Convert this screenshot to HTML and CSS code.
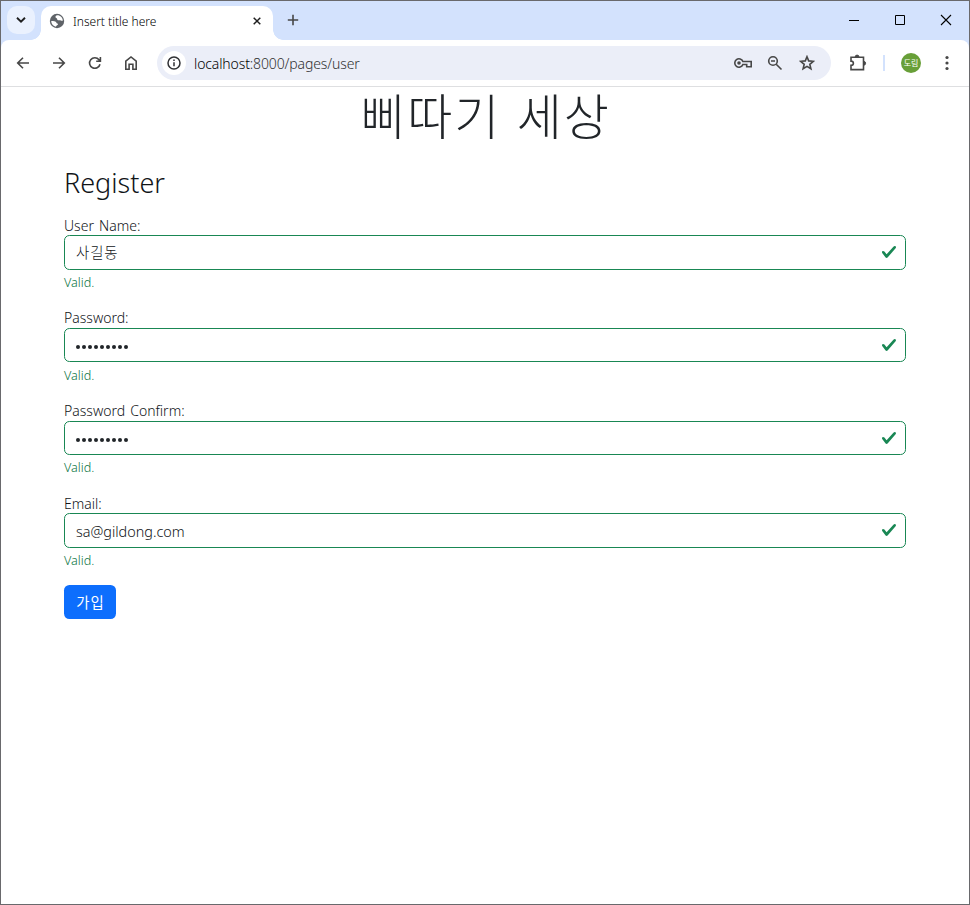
FILE: index.html
```html
<!DOCTYPE html>
<html lang="ko">
<head>
<meta charset="utf-8">
<title>Insert title here</title>
<link rel="stylesheet" href="styles.css">
</head>
<body>
<div class="window">
  <header class="tabstrip">
    <div class="tab-search"><svg width="10" height="6" viewBox="0 0 10 6"><path d="M1 .8 5 4.600 9 .8" fill="none" stroke="#1f1f1f" stroke-width="1.9"/></svg></div>
    <div class="tab">
      <svg class="favicon" width="16" height="16" viewBox="0 0 16 16"><circle cx="8" cy="8" r="7.200" fill="#5f6368"/><path d="M8.300 2.200C6.800 2.400 6.300 3.400 6.500 4.300 6.800 5.200 7.800 4.700 8 5.700 8.200 6.800 9 7.300 10.200 7.200 11.600 7.100 12.200 7.900 13.800 7.700 13.900 4.800 11.500 2.200 8.300 2.200ZM2.200 8.100C3.800 7.900 5.600 7.900 6.700 8.700 7.600 9.400 7.200 10.300 8.300 10.500 9.300 10.700 9.200 11.600 8.500 12 7.800 12.400 7.200 12.700 7 13.800 4.200 13.300 2.200 11 2.200 8.100Z" fill="#fff"/></svg>
      <span class="tab-title">Insert title here</span>
      <svg class="tab-close" width="8" height="8" viewBox="0 0 8 8"><path d="m.7.7 6.600 6.600m0-6.600L.7 7.300" stroke="#1f1f1f" stroke-width="1.500"/></svg>
    </div>
    <svg class="new-tab" width="12" height="12" viewBox="0 0 12 12"><path d="M6 .8v10.400M.8 6h10.400" stroke="#474747" stroke-width="1.600"/></svg>
    <div class="controls">
      <svg width="46" height="38" viewBox="0 0 46 38"><path d="M18 19.500h10" stroke="#000"/></svg>
      <svg width="46" height="38" viewBox="0 0 46 38"><path d="M18.500 14.500h9v9h-9z" fill="none" stroke="#000"/></svg>
      <svg width="46" height="38" viewBox="0 0 46 38"><path d="m18 14 10 10m0-10L18 24" stroke="#000" stroke-width="1.100"/></svg>
    </div>
  </header>
  <nav class="toolbar">
    <div class="nav-buttons">
      <svg width="16" height="16" viewBox="0 0 16 16"><path d="M14 8H2.800M8 2.700 2.700 8 8 13.300" /></svg>
      <svg width="16" height="16" viewBox="0 0 16 16"><path d="M2 8h11.200M8 2.700 13.300 8 8 13.300"/></svg>
      <svg width="16" height="16" viewBox="0 0 16 16"><path d="M13 9.200A5.300 5.300 0 1 1 12 4.700L13.200 6M13.400 2v4.300H9.200"/></svg>
      <svg width="16" height="16" viewBox="0 0 16 16"><path d="M2.800 6.200 8 2l5.200 4.200v8H9.900V9.300H6.100v4.900H2.800z"/></svg>
    </div>
    <div class="omnibox">
      <div class="site-info"><svg width="16" height="16" viewBox="0 0 16 16"><circle cx="8" cy="8" r="6" fill="none" stroke="#303134" stroke-width="1.500"/><path d="M8 7.200v4M8 4.500v1.500" stroke="#303134" stroke-width="1.500"/></svg></div>
      <span class="url"><b>localhost</b>:8000/pages/user</span>
      <div class="omni-icons">
        <svg width="20" height="16" viewBox="0 0 20 16"><path d="M9.900 6.500h8.300v5.200h-4.500V9.500H9.900A4.200 4.200 0 1 1 9.900 6.500Z"/><circle cx="6" cy="8" r="1.800" fill="#474747" stroke="none"/></svg>
        <svg width="16" height="16" viewBox="0 0 16 16"><circle cx="6" cy="6" r="4.300"/><path d="m9.200 9.200 5.300 5.300M4 6h4"/></svg>
        <svg width="16" height="16" viewBox="0 0 16 16"><path d="m8 1.700 1.700 4.200 4.600.4-3.500 3 1.100 4.500L8 11.400l-3.900 2.400 1.100-4.500-3.500-3 4.600-.4Z"/></svg>
      </div>
    </div>
    <svg class="extensions" width="18" height="18" viewBox="0 0 18 18"><path d="M2 3.200h12.500v12.400H2v-4.200c3.200 0 3.200-4.300 0-4.300Z"/><path d="M6.200 3a1.900 1.900 0 0 1 3.800 0M14.700 7.400a1.900 1.900 0 0 1 0 3.800" fill="#474747" stroke-width="1"/></svg>
    <span class="divider"></span>
    <span class="avatar">도림</span>
    <svg class="menu" width="4" height="16" viewBox="0 0 4 16"><g fill="#474747" stroke="none"><circle cx="2" cy="2.500" r="1.600"/><circle cx="2" cy="8" r="1.600"/><circle cx="2" cy="13.500" r="1.600"/></g></svg>
  </nav>
  <main class="page">
    <h1>삐따기 세상</h1>
    <form class="register">
      <h2>Register</h2>
      <div class="field">
        <label>User Name:</label>
        <div class="input"><span class="v-name">사길동</span><svg class="check" width="16" height="16" viewBox="0 0 8 8"><path fill="#198754" d="M2.300 6.730.6 4.530c-.4-1.040.46-1.400 1.100-.8l1.100 1.400 3.400-3.800c.6-.63 1.600-.27 1.200.7l-4 4.600c-.43.5-.8.4-1.100.1z"/></svg></div>
        <p class="feedback">Valid.</p>
      </div>
      <div class="field">
        <label>Password:</label>
        <div class="input"><span class="dots"><i></i><i></i><i></i><i></i><i></i><i></i><i></i><i></i><i></i></span><svg class="check" width="16" height="16" viewBox="0 0 8 8"><path fill="#198754" d="M2.300 6.730.6 4.530c-.4-1.040.46-1.400 1.100-.8l1.100 1.400 3.400-3.800c.6-.63 1.600-.27 1.200.7l-4 4.600c-.43.5-.8.4-1.100.1z"/></svg></div>
        <p class="feedback">Valid.</p>
      </div>
      <div class="field">
        <label>Password Confirm:</label>
        <div class="input"><span class="dots"><i></i><i></i><i></i><i></i><i></i><i></i><i></i><i></i><i></i></span><svg class="check" width="16" height="16" viewBox="0 0 8 8"><path fill="#198754" d="M2.300 6.730.6 4.530c-.4-1.040.46-1.400 1.100-.8l1.100 1.400 3.400-3.800c.6-.63 1.600-.27 1.200.7l-4 4.600c-.43.5-.8.4-1.100.1z"/></svg></div>
        <p class="feedback">Valid.</p>
      </div>
      <div class="field">
        <label>Email:</label>
        <div class="input"><span class="v-email">sa@gildong.com</span><svg class="check" width="16" height="16" viewBox="0 0 8 8"><path fill="#198754" d="M2.300 6.730.6 4.530c-.4-1.040.46-1.400 1.100-.8l1.100 1.400 3.400-3.800c.6-.63 1.600-.27 1.200.7l-4 4.600c-.43.5-.8.4-1.100.1z"/></svg></div>
        <p class="feedback">Valid.</p>
      </div>
      <button type="button">가입</button>
    </form>
  </main>
</div>
</body>
</html>
```
FILE: styles.css
```css
* { box-sizing: border-box; }
body { margin: 0; font-family: "Noto Sans", "Noto Sans CJK KR", sans-serif; color: #212529; background: #fff; }
svg { display: block; flex: none; }
h1, h2, p { margin: 0; }
.window { width: 970px; height: 905px; border: 1px solid #69696c; background: #d3e2fd; display: flex; flex-direction: column; overflow: hidden; }
.tabstrip { height: 39px; display: flex; flex: none; }
.tab-search { width: 28px; height: 28px; margin: 5px 0 0 6px; border-radius: 10px; background: #eaf1fe; display: flex; align-items: center; justify-content: center; }
.tab { position: relative; width: 232px; height: 34px; margin: 5px 0 0 6px; padding: 0 12px 5px 8px; border-radius: 10px 10px 0 0; background: #fff; display: flex; align-items: center; }
.tab::before, .tab::after { content: ""; position: absolute; bottom: 0; width: 10px; height: 10px; }
.tab::before { left: -10px; background: radial-gradient(circle at 0 0, transparent 9.5px, #fff 10px); }
.tab::after { right: -10px; background: radial-gradient(circle at 100% 0, transparent 9.5px, #fff 10px); }
.tab-title { margin-left: 8px; font-size: 12px; font-weight: 300; color: #000; white-space: nowrap; padding-top: 1px; }
.tab-close { margin-left: auto; }
.new-tab { margin: 13px 0 0 14px; }
.controls { margin-left: auto; display: flex; }
.toolbar { height: 47px; flex: none; background: #fff; border-bottom: 1px solid #dedfe1; border-radius: 8px 8px 0 0; display: flex; align-items: center; padding-left: 14px; }
.toolbar svg { fill: none; stroke: #474747; stroke-width: 1.6; }
.nav-buttons { display: flex; gap: 20px; }
.omnibox { width: 674px; height: 34px; margin-left: 18px; padding: 0 16px 0 5px; border-radius: 17px; background: #ebeef8; display: flex; align-items: center; }
.site-info { width: 24px; height: 24px; border-radius: 50%; background: #fff; display: flex; align-items: center; justify-content: center; }
.url { margin-left: 8px; font-size: 14px; font-weight: 300; letter-spacing: -0.12px; color: #303030; white-space: nowrap; }
.url b { font-weight: 300; color: #000; }
.omni-icons { margin-left: auto; display: flex; gap: 16px; }
.omni-icons svg:nth-child(2) { margin-left: -2px; }
.extensions { margin-left: 18px; }
.divider { width: 2px; height: 16px; margin-left: 16px; background: #d3e2fd; }
.avatar { width: 20px; height: 20px; margin-left: 16px; border-radius: 50%; background: #689f38; color: #fff; font-size: 8px; line-height: 20px; text-align: center; }
.menu { margin-left: 24px; }
.page { flex: 1; background: #fff; padding: 0 63px; }
h1 { height: 60px; line-height: 54px; font-family: "Noto Sans CJK KR", sans-serif; font-size: 49px; font-weight: 300; letter-spacing: 1.9px; text-indent: 1px; text-align: center; white-space: nowrap; }
h2 { margin-top: 19px; height: 47.7px; line-height: 34px; font-size: 27px; font-weight: 300; color: #101418; }
.field { margin-bottom: 14.4px; }
label { display: block; height: 21.5px; line-height: 24px; font-size: 14px; font-weight: 300; word-spacing: 1.5px; color: #101418; }
label, .input span, .feedback { white-space: nowrap; }
.input { height: 34.4px; padding: 0 8px 0 11px; border: 1px solid #198754; border-radius: 5.4px; display: flex; align-items: center; justify-content: space-between; font-size: 14.4px; font-weight: 300; color: #101418; }
.v-name { padding-bottom: 2px; font-family: "Noto Sans CJK KR", sans-serif; letter-spacing: 0.9px; }
.v-email { padding-top: 2px; }
.dots { display: flex; gap: 2px; padding: 4px 0 0 0.4px; }
.dots i { width: 4px; height: 4px; border-radius: 50%; background: #212529; }
.feedback { margin-top: 3.5px; height: 18.9px; line-height: 19px; font-size: 12.6px; font-weight: 300; color: #0b7443; }
button { display: block; width: 52px; height: 34px; margin-top: 15px; padding: 0; border: 0; border-radius: 5.4px; background: #0d6efd; color: #fff; font: 400 14.4px/34px "Noto Sans CJK KR", sans-serif; letter-spacing: 1px; text-indent: 1px; }
```
